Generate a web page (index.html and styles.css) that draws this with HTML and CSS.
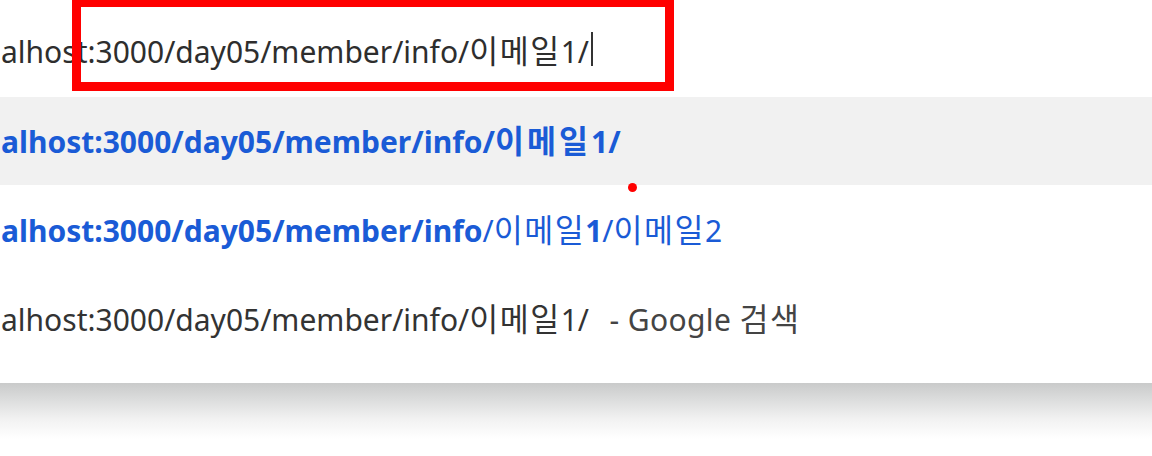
FILE: index.html
```html
<!DOCTYPE html>
<html lang="ko">
<head>
<meta charset="utf-8">
<link rel="stylesheet" href="styles.css">
</head>
<body>
<div class="page">
  <div class="omnibox">
    <span class="url">alhost:3000/day05/member/info/<span class="ko">이메일</span>1/</span><span class="caret"></span>
    <div class="highlight"></div>
  </div>
  <div class="dropdown">
    <div class="row selected">
      <span class="blue bold">alhost:3000/day05/member/info/<span class="ko">이메일</span>1/</span>
    </div>
    <div class="row">
      <span class="blue"><b>alhost:3000/day05/member/info</b>/<span class="ko">이메일</span><b>1</b>/<span class="ko">이메일</span>2</span>
    </div>
    <div class="row last">
      <span class="dark">alhost:3000/day05/member/info/<span class="ko">이메일</span>1/</span><span class="muted">&nbsp; - Google <span class="ko">검색</span></span>
    </div>
    <div class="dot"></div>
  </div>
  <div class="shadow"></div>
</div>
</body>
</html>
```
FILE: styles.css
```css
html, body {
  margin: 0;
  padding: 0;
  background: #ffffff;
}
.page {
  width: 1152px;
  height: 456px;
  overflow: hidden;
  font-family: "Noto Sans", "Noto Sans CJK KR", sans-serif;
  font-size: 30px;
}
.ko {
  font-family: "Noto Sans CJK KR", sans-serif;
  font-size: 31.5px;
  letter-spacing: 1.5px;
  font-weight: 400;
}
.bold .ko {
  font-weight: 700;
  letter-spacing: 3px;
}
.omnibox {
  position: relative;
  height: 97px;
  display: flex;
  align-items: center;
  padding-left: 1px;
  color: #2e2e2e;
  white-space: nowrap;
}
.caret {
  display: inline-block;
  width: 2px;
  height: 34px;
  background: #333;
  margin-left: 2px;
}
.highlight {
  position: absolute;
  left: 72px;
  top: -2px;
  width: 584px;
  height: 75px;
  border: 9px solid #ff0000;
}
.dropdown {
  position: relative;
  display: flex;
  flex-direction: column;
  height: 286px;
}
.row {
  height: 89px;
  box-sizing: border-box;
  padding-bottom: 4px;
  display: flex;
  align-items: center;
  padding-left: 1px;
  white-space: nowrap;
}
.row.selected {
  height: 88px;
  background: #f1f1f1;
}
.blue {
  color: #1a5bd6;
}
.bold, .blue b {
  font-weight: 700;
}
.dark {
  color: #333333;
}
.muted {
  color: #444444;
  padding-left: 4px;
  letter-spacing: 0.4px;
}
.dot {
  position: absolute;
  left: 628px;
  top: 86px;
  width: 9px;
  height: 9px;
  border-radius: 50%;
  background: #ff0000;
}
.shadow {
  height: 56px;
  background: linear-gradient(to bottom, #c9caca 0%, #dcdddd 30%, #f2f2f2 65%, #ffffff 100%);
}
```
